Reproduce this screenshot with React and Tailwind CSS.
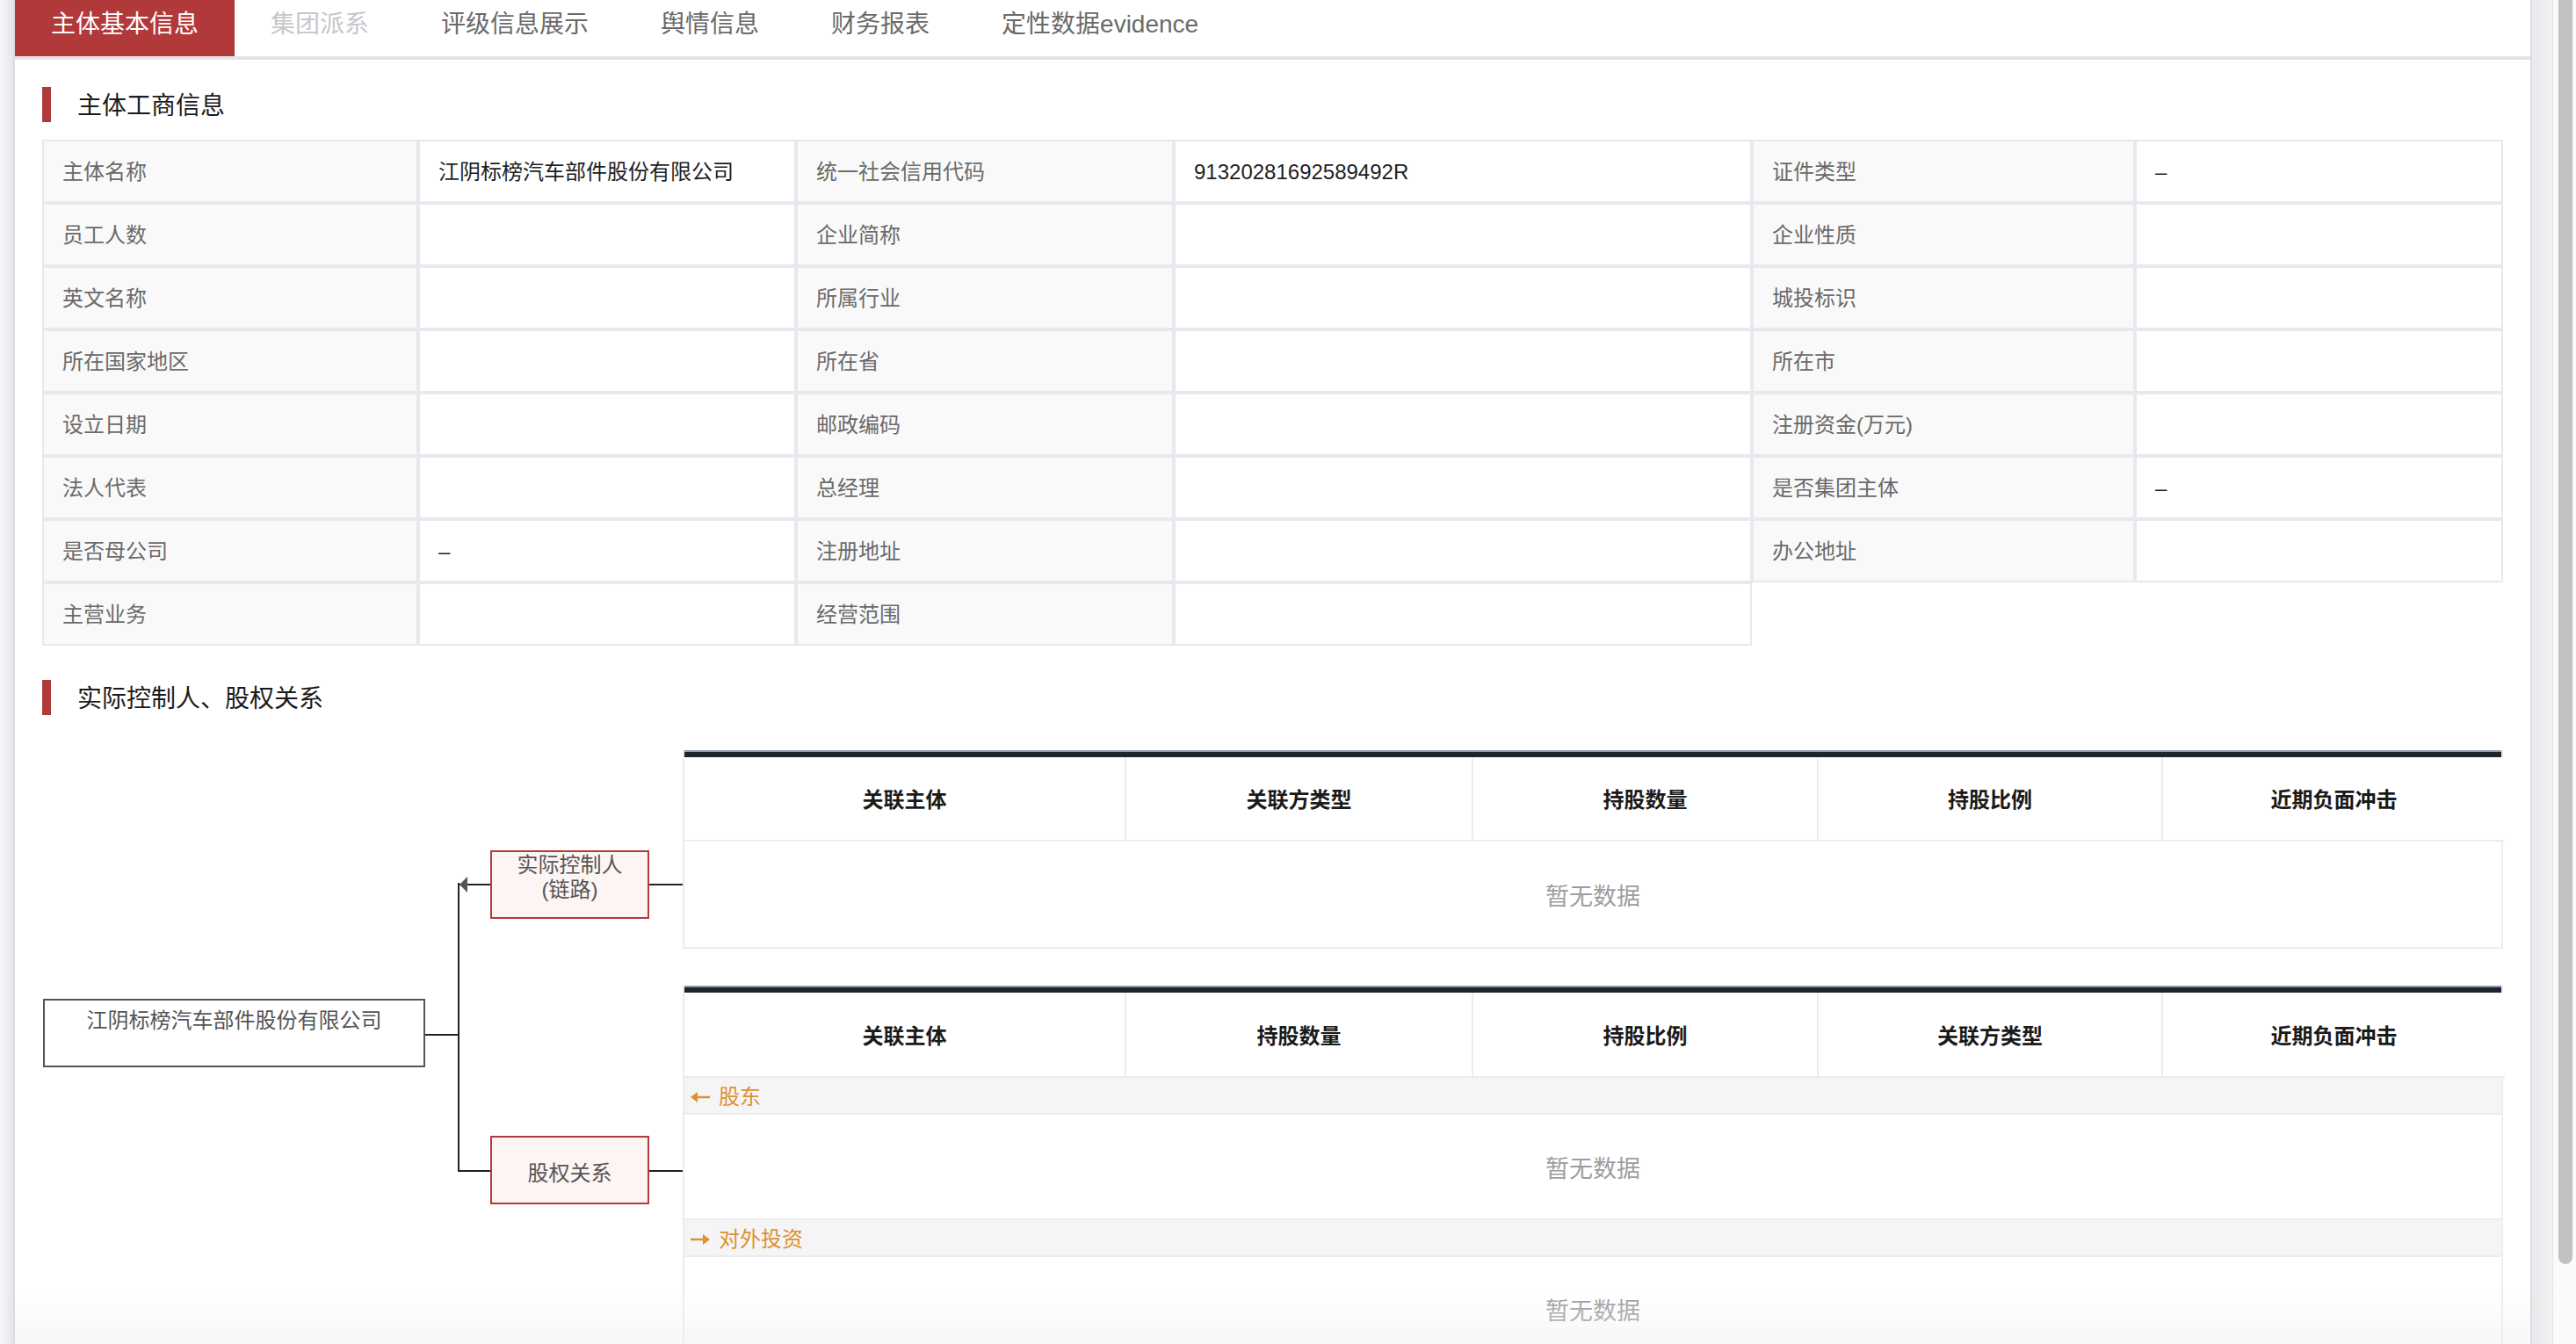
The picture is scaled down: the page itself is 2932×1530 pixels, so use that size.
import React from "react";

const RED = "bg-[#b2393a]";

function SectionHeader({ title }) {
  return (
    <div className="flex h-[40px] items-center">
      <div className={`h-[40px] w-[10px] ${RED}`} />
      <div className="ml-[30px] pt-[3px] text-[28px] leading-[40px] text-[#1b1b1b]">{title}</div>
    </div>
  );
}

const infoRows = [
  ["主体名称", "江阴标榜汽车部件股份有限公司", "统一社会信用代码", "91320281692589492R", "证件类型", "–"],
  ["员工人数", "", "企业简称", "", "企业性质", ""],
  ["英文名称", "", "所属行业", "", "城投标识", ""],
  ["所在国家地区", "", "所在省", "", "所在市", ""],
  ["设立日期", "", "邮政编码", "", "注册资金(万元)", ""],
  ["法人代表", "", "总经理", "", "是否集团主体", "–"],
  ["是否母公司", "–", "注册地址", "", "办公地址", ""],
  ["主营业务", "", "经营范围", ""],
];

function InfoTable() {
  return (
    <div className="mt-[20px] grid grid-cols-[428px_430px_430px_658px_436px_419px]">
      {infoRows.map((row, ri) =>
        row.map((cell, ci) => (
          <div
            key={`${ri}-${ci}`}
            className={`flex h-[72px] items-center border-2 border-[#e8e8ee] pl-[21px] pt-[1px] text-[24px] leading-[30px] ${
              ci % 2 === 0 ? "bg-[#f9f9f9] text-[#6a6a6a]" : "bg-white text-[#1e1e1e]"
            }`}
          >
            {cell}
          </div>
        ))
      )}
    </div>
  );
}

function TopBar() {
  return (
    <div>
      <div className="h-[2px] bg-[#8e9cb5]" />
      <div className="h-[6px] bg-[#1f232b]" />
    </div>
  );
}

function HeaderRow({ cols, height }) {
  return (
    <div className="grid grid-cols-[501px_395px_393px_392px_391px]">
      {cols.map((c, i) => (
        <div
          key={c}
          className={`flex items-center justify-center border-b-2 border-[#ececf0] bg-white pt-[4px] text-[24px] font-bold leading-[30px] text-[#1a1a1a] ${
            i > 0 ? "border-l-2" : ""
          } ${height}`}
        >
          {c}
        </div>
      ))}
    </div>
  );
}

function Empty({ height = "h-[120px]" }) {
  return (
    <div className={`flex ${height} items-center justify-center border-b-2 border-[#ececf0] bg-white pt-[5px] text-[27px] leading-[34px] text-[#9d9d9d]`}>
      暂无数据
    </div>
  );
}

function ArrowLeft() {
  return (
    <svg width="24" height="14" viewBox="0 0 24 14">
      <line x1="6" y1="7" x2="23" y2="7" stroke="#e0902f" strokeWidth="2.5" />
      <polygon points="1,7 9,1 9,13" fill="#e0902f" />
    </svg>
  );
}

function ArrowRight() {
  return (
    <svg width="24" height="14" viewBox="0 0 24 14">
      <line x1="1" y1="7" x2="18" y2="7" stroke="#e0902f" strokeWidth="2.5" />
      <polygon points="23,7 15,1 15,13" fill="#e0902f" />
    </svg>
  );
}

function GroupRow({ icon, label }) {
  return (
    <div className="flex h-[42px] items-center gap-[9px] border-b-2 border-[#ececf0] bg-[#f5f5f6] pl-[6px] pt-[3px] text-[24px] leading-[30px] text-[#e0902f]">
      {icon}
      <span>{label}</span>
    </div>
  );
}

function Diagram() {
  return (
    <div className="relative h-[620px] w-[729px] shrink-0">
      <svg className="absolute left-0 top-0" width="729" height="620">
        <g stroke="#222" strokeWidth="2">
          <line x1="436" y1="324" x2="474" y2="324" />
          <line x1="474" y1="151" x2="474" y2="480" />
          <line x1="474" y1="153" x2="510" y2="153" />
          <line x1="473" y1="479" x2="510" y2="479" />
          <line x1="691" y1="153" x2="729" y2="153" />
          <line x1="691" y1="479" x2="729" y2="479" />
        </g>
        <polygon points="475,153 484,144 484,162" fill="#555" />
      </svg>
      <div className="absolute left-[1px] top-[283px] h-[78px] w-[435px] border-2 border-[#555] bg-white pt-[9px] text-center text-[24px] leading-[28px] text-[#555]">
        江阴标榜汽车部件股份有限公司
      </div>
      <div className="absolute left-[510px] top-[114px] h-[78px] w-[181px] border-2 border-[#b5393a] bg-[#fdf4f4] pt-[1px] text-center text-[24px] leading-[28px] text-[#555]">
        <div>实际控制人</div>
        <div>(链路)</div>
      </div>
      <div className="absolute left-[510px] top-[439px] flex h-[78px] w-[181px] items-center justify-center border-2 border-[#b5393a] bg-[#fdf4f4] pt-[8px] text-[24px] leading-[28px] text-[#555]">
        股权关系
      </div>
    </div>
  );
}

function Tables() {
  return (
    <div className="w-[2072px] shrink-0">
      <div className="border-x-2 border-[#ececf0]">
        <TopBar />
        <HeaderRow cols={["关联主体", "关联方类型", "持股数量", "持股比例", "近期负面冲击"]} height="h-[96px]" />
        <Empty height="h-[122px]" />
      </div>
      <div className="mt-[42px] border-x-2 border-[#ececf0]">
        <TopBar />
        <HeaderRow cols={["关联主体", "持股数量", "持股比例", "关联方类型", "近期负面冲击"]} height="h-[97px]" />
        <GroupRow icon={<ArrowLeft />} label="股东" />
        <Empty />
        <GroupRow icon={<ArrowRight />} label="对外投资" />
        <Empty />
      </div>
    </div>
  );
}

const tabs = ["主体基本信息", "集团派系", "评级信息展示", "舆情信息", "财务报表", "定性数据evidence"];

function TabBar() {
  return (
    <div>
      <div className="flex h-[64px] bg-white">
        {tabs.map((t, i) => (
          <div
            key={t}
            className={`h-[64px] px-[41px] text-[28px] leading-[56px] ${
              i === 0 ? `${RED} text-white` : i === 1 ? "text-[#c6c7cc]" : "text-[#6a6a6a]"
            }`}
          >
            {t}
          </div>
        ))}
      </div>
      <div className="h-[4px] bg-[#e4e4e6]" />
    </div>
  );
}

export default function App() {
  return (
    <div className="flex h-screen w-full overflow-hidden bg-[#efeff1] font-['Liberation_Sans','Noto_Sans_CJK_SC',sans-serif]">
      <div className="w-[15px] shrink-0 bg-gradient-to-r from-[#f6f6f7] to-[#e6e6ea]" />
      <div className="relative w-[2867px] shrink-0 overflow-hidden border-x-2 border-[#dcdce4] bg-white">
        <TabBar />
        <div className="px-[31px] pt-[31px]">
          <SectionHeader title="主体工商信息" />
          <InfoTable />
          <div className="mt-[39px]">
            <SectionHeader title="实际控制人、股权关系" />
          </div>
          <div className="mt-[40px] flex">
            <Diagram />
            <Tables />
          </div>
        </div>
        <div className="pointer-events-none absolute inset-x-0 bottom-0 h-[60px] bg-gradient-to-b from-white/0 to-[#efeff2]/50" />
      </div>
      <div className="w-[23px] shrink-0 bg-gradient-to-r from-[#e9e9ec] to-[#f3f3f4]" />
      <div className="relative w-[27px] shrink-0 border-l border-[#e4e4e4] bg-[#fafafa]">
        <div className="ml-[6px] h-[1439px] w-[16px] rounded-b-[8px] bg-[#c1c1c1]" />
      </div>
    </div>
  );
}
